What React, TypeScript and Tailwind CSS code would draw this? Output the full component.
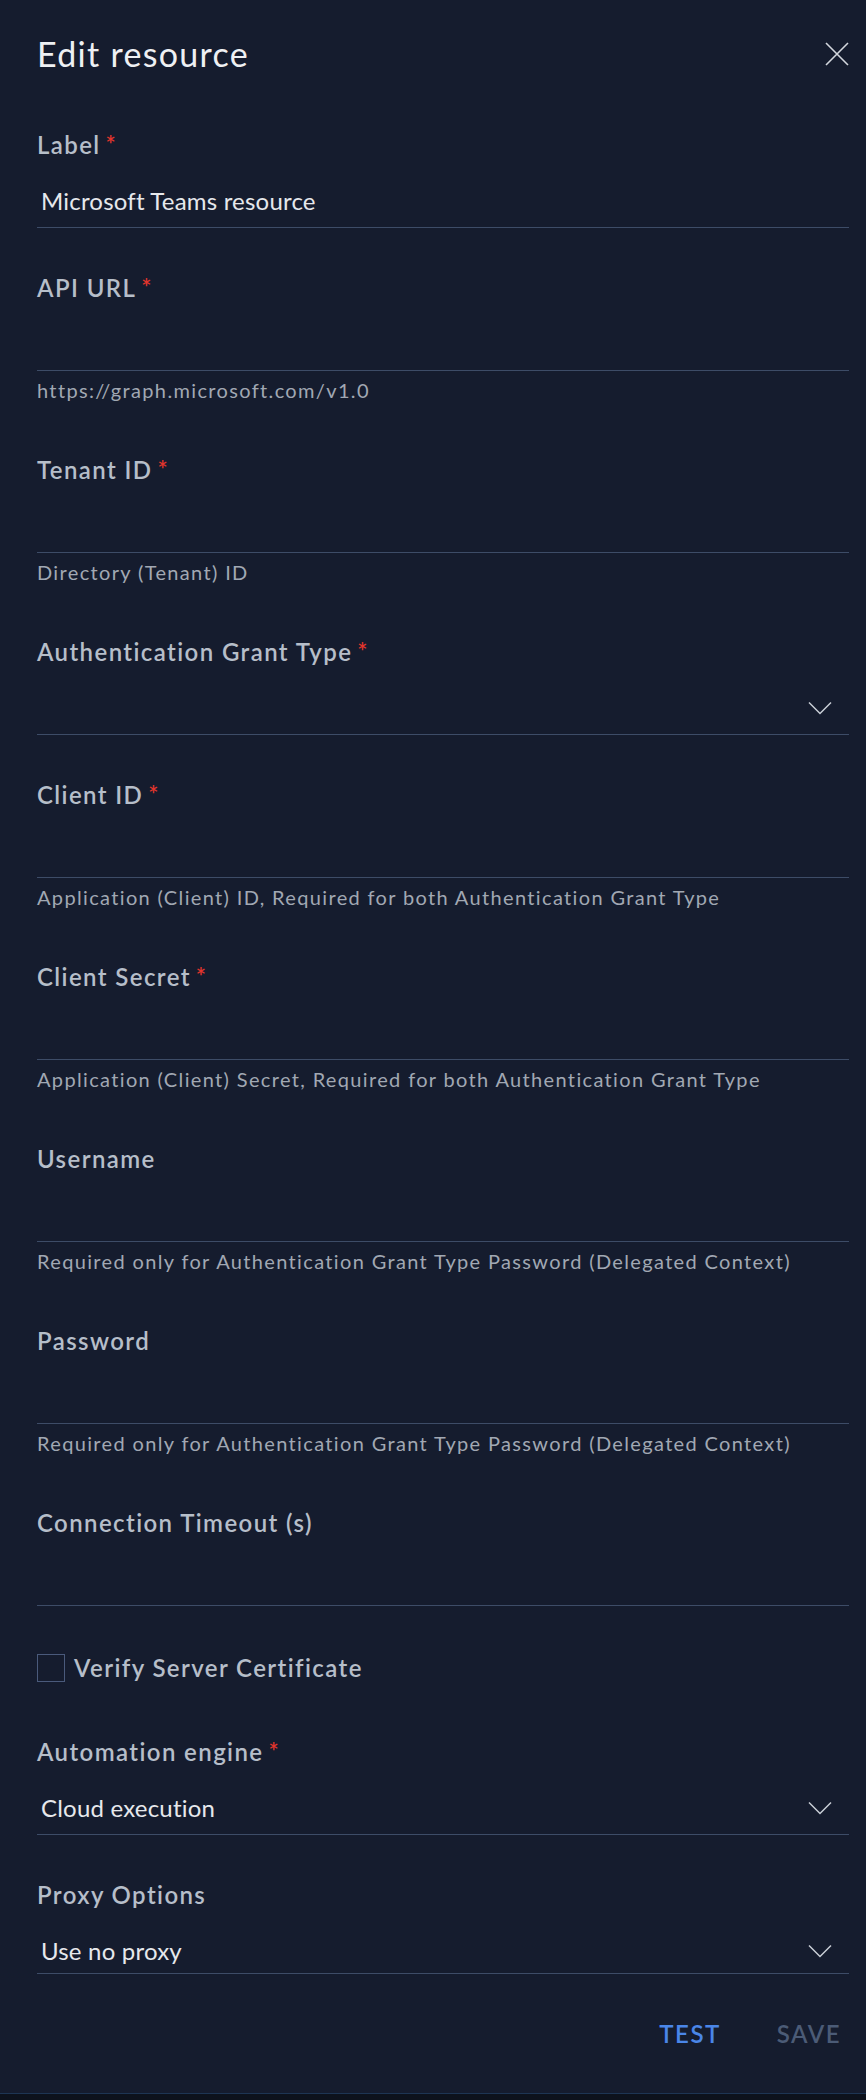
import React from 'react';

type FieldProps = {
  label: string;
  required?: boolean;
  value?: string;
  helper?: string;
  select?: boolean;
  bottomPad?: string;
  spaced?: boolean;
};

function Chevron() {
  return (
    <svg width="24" height="14" viewBox="0 0 24 14" fill="none" className="shrink-0">
      <path d="M1 1.5 L12 12.5 L23 1.5" stroke="#c9ced6" strokeWidth="1.5" />
    </svg>
  );
}

function Field({ label, required, value, helper, select, bottomPad = 'pb-[10px]', spaced = true }: FieldProps) {
  return (
    <div className={spaced ? 'mb-[44px]' : ''}>
      <div className="h-8 text-[24px] leading-8 font-semibold tracking-[1.4px] text-[#b6bec9]">
        {label}
        {required && <span className="ml-[5px] text-[#e3352c]">*</span>}
      </div>
      <div className={`flex items-center pt-6 ${bottomPad} border-b border-[#3d4c67]`}>
        <div className="flex-1 h-8 pl-1 text-[24px] leading-8 tracking-[0.2px] text-[#e6e8ec]">{value}</div>
        {select && (
          <div className="pr-[17px]">
            <Chevron />
          </div>
        )}
      </div>
      {helper && (
        <div className="h-[39px] pt-[5px] text-[20px] leading-7 tracking-[1.35px] text-[#a1a8b3]">{helper}</div>
      )}
    </div>
  );
}

export default function App() {
  return (
    <div className="min-h-[2100px] w-full bg-[#151c2e] flex flex-col font-['Lato',sans-serif]">
      <div className="flex-1 pl-[37px] pr-[17px]">
        <div className="flex items-center justify-between pt-[34px] h-[74px]">
          <h1 className="text-[34px] leading-10 font-normal tracking-[1.3px] text-[#eef0f3]">Edit resource</h1>
          <svg width="24" height="24" viewBox="0 0 24 24" fill="none">
            <path d="M1 1 L23 23 M23 1 L1 23" stroke="#d3d7dd" strokeWidth="1.6" />
          </svg>
        </div>
        <div className="pt-[55px]">
          <Field label="Label" required value="Microsoft Teams resource" />
          <Field label="API URL" required helper="https://graph.microsoft.com/v1.0" />
          <Field label="Tenant ID" required helper="Directory (Tenant) ID" />
          <Field label="Authentication Grant Type" required select />
          <Field
            label="Client ID"
            required
            helper="Application (Client) ID, Required for both Authentication Grant Type"
          />
          <Field
            label="Client Secret"
            required
            helper="Application (Client) Secret, Required for both Authentication Grant Type"
          />
          <Field
            label="Username"
            helper="Required only for Authentication Grant Type Password (Delegated Context)"
          />
          <Field
            label="Password"
            helper="Required only for Authentication Grant Type Password (Delegated Context)"
          />
          <Field label="Connection Timeout (s)" spaced={false} />
          <label className="mt-[48px] flex items-center gap-[9px] h-7">
            <span className="w-7 h-7 border border-[#4a5a7b]" />
            <span className="text-[24px] leading-7 font-semibold tracking-[1.4px] text-[#b6bec9]">
              Verify Server Certificate
            </span>
          </label>
          <div className="mt-[54px]">
            <Field label="Automation engine" required value="Cloud execution" select bottomPad="pb-[10px]" />
          </div>
          <Field label="Proxy Options" value="Use no proxy" select bottomPad="pb-[6px]" />
        </div>
        <div className="flex justify-end gap-[56px] pr-[8px]">
          <button className="text-[24px] leading-8 font-semibold tracking-[1.5px] text-[#4a86e8]">TEST</button>
          <button className="text-[24px] leading-8 font-semibold tracking-[1.5px] text-[#4b5b76]">SAVE</button>
        </div>
      </div>
      <div className="h-[7px] border-t border-[#1d3553] bg-[#0d121c]" />
    </div>
  );
}
